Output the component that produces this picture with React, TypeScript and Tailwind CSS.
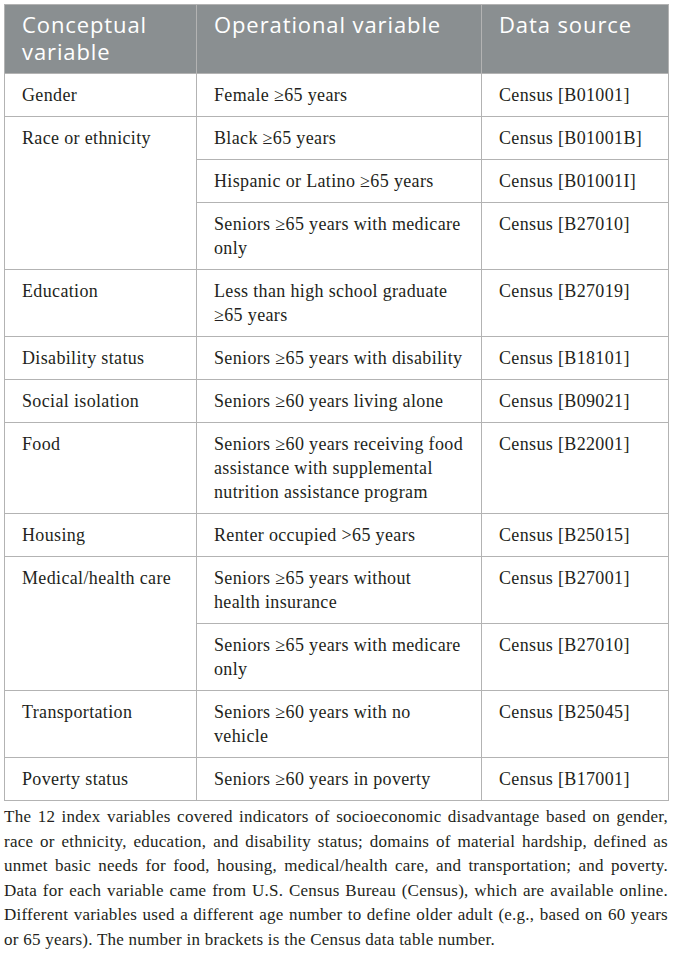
const rows: { a?: string; span?: number; b: string[]; c: string }[] = [
  { a: "Gender", b: ["Female ≥65 years"], c: "Census [B01001]" },
  { a: "Race or ethnicity", span: 3, b: ["Black ≥65 years"], c: "Census [B01001B]" },
  { b: ["Hispanic or Latino ≥65 years"], c: "Census [B01001I]" },
  { b: ["Seniors ≥65 years with medicare", "only"], c: "Census [B27010]" },
  { a: "Education", b: ["Less than high school graduate", "≥65 years"], c: "Census [B27019]" },
  { a: "Disability status", b: ["Seniors ≥65 years with disability"], c: "Census [B18101]" },
  { a: "Social isolation", b: ["Seniors ≥60 years living alone"], c: "Census [B09021]" },
  {
    a: "Food",
    b: ["Seniors ≥60 years receiving food", "assistance with supplemental", "nutrition assistance program"],
    c: "Census [B22001]",
  },
  { a: "Housing", b: ["Renter occupied >65 years"], c: "Census [B25015]" },
  { a: "Medical/health care", span: 2, b: ["Seniors ≥65 years without", "health insurance"], c: "Census [B27001]" },
  { b: ["Seniors ≥65 years with medicare", "only"], c: "Census [B27010]" },
  { a: "Transportation", b: ["Seniors ≥60 years with no", "vehicle"], c: "Census [B25045]" },
  { a: "Poverty status", b: ["Seniors ≥60 years in poverty"], c: "Census [B17001]" },
];

const note = [
  "The 12 index variables covered indicators of socioeconomic disadvantage based on gender,",
  "race or ethnicity, education, and disability status; domains of material hardship, defined as",
  "unmet basic needs for food, housing, medical/health care, and transportation; and poverty.",
  "Data for each variable came from U.S. Census Bureau (Census), which are available online.",
  "Different variables used a different age number to define older adult (e.g., based on 60 years",
  "or 65 years). The number in brackets is the Census data table number.",
];

const td = "border border-[#b3b3b3] px-[17px] py-[9px] align-top whitespace-nowrap";
const th = "border border-[#b3b3b3] px-[17px] pt-[6px] pb-[8px] align-top text-left font-normal";

export default function App() {
  return (
    <div className="min-h-screen bg-white px-[4px] pt-[4px] font-['Liberation_Serif',serif] text-[#231f20]">
      <table className="w-[664px] table-fixed border-collapse text-[18px] leading-[24px] tracking-[0.35px]">
        <colgroup>
          <col className="w-[192px]" />
          <col className="w-[285px]" />
          <col className="w-[187px]" />
        </colgroup>
        <thead>
          <tr className="bg-[#8a8f91] font-['Open_Sans',sans-serif] text-[22px] leading-[27px] tracking-[0.9px] text-white">
            <th className={th}>
              Conceptual
              <br />
              variable
            </th>
            <th className={th}>Operational variable</th>
            <th className={th}>Data source</th>
          </tr>
        </thead>
        <tbody>
          {rows.map((r, i) => (
            <tr key={i}>
              {r.a && (
                <td className={td} rowSpan={r.span ?? 1}>
                  {r.a}
                </td>
              )}
              <td className={td}>
                {r.b.map((l, j) => (
                  <div key={j}>{l}</div>
                ))}
              </td>
              <td className={td}>{r.c}</td>
            </tr>
          ))}
        </tbody>
      </table>

      {/* Footnote */}
      <div className="mt-[4px] w-[664px] text-[17px] leading-[24.5px] tracking-[0.25px]">
        {note.map((line, i) => (
          <p
            key={i}
            className={i < note.length - 1 ? "text-justify [text-align-last:justify]" : "text-left"}
          >
            {line}
          </p>
        ))}
      </div>
    </div>
  );
}
